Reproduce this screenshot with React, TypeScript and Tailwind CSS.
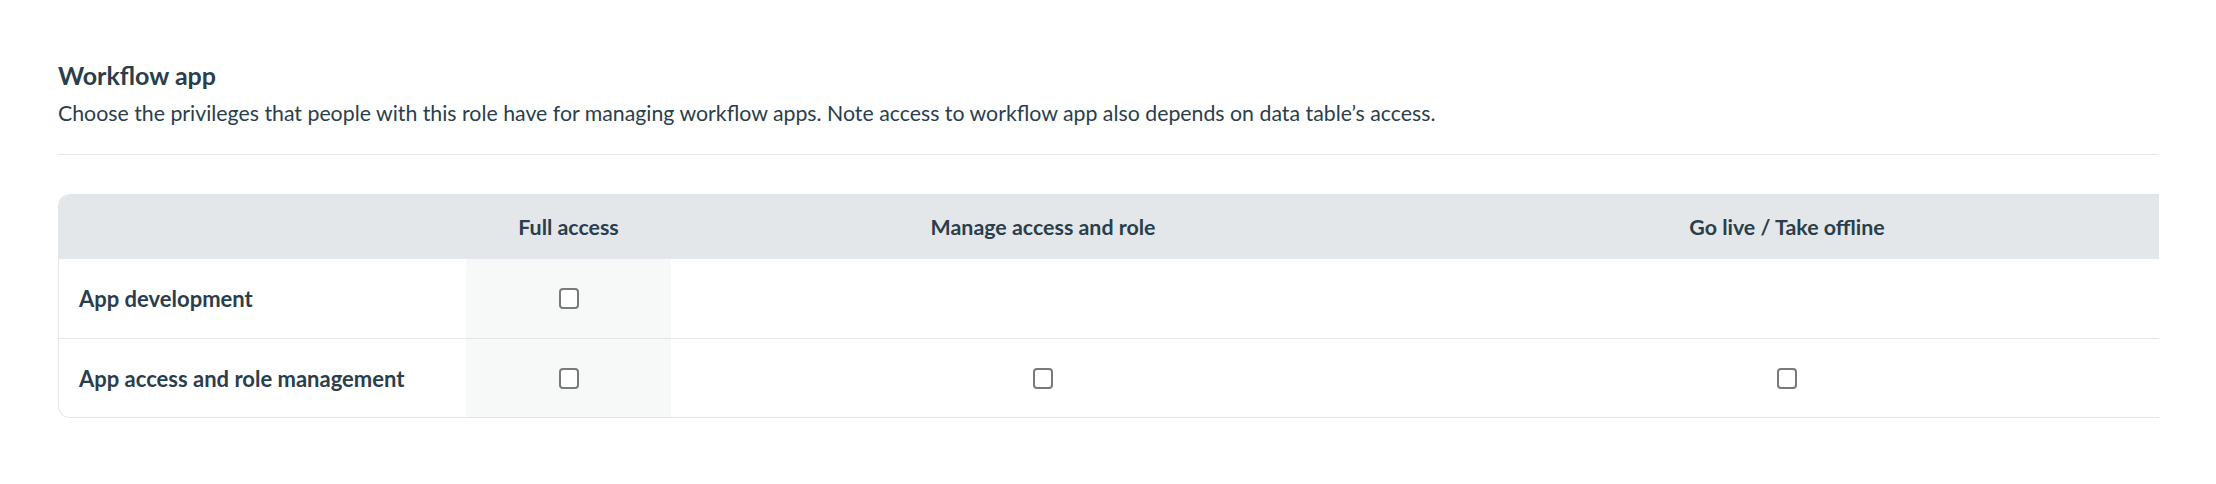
import React from "react";

const COLUMNS = ["Full access", "Manage access and role", "Go live / Take offline"];

const ROWS: { label: string; cells: boolean[] }[] = [
  { label: "App development", cells: [true, false, false] },
  { label: "App access and role management", cells: [true, true, true] },
];

function Checkbox() {
  return (
    <span className="block w-[20px] h-[21px] rounded-[4px] border-2 border-[#7a7a7a] bg-white" />
  );
}

export default function App() {
  return (
    <main
      className="min-h-screen bg-white text-[#2a3e4c] pl-[58px] pr-[57px] pt-[60px]"
      style={{ fontFamily: "Lato, 'Liberation Sans', sans-serif" }}
    >
      <h2 className="text-[25px] leading-[30px] font-bold">Workflow app</h2>
      <p className="mt-[8px] text-[21.3px] leading-[30px]">
        Choose the privileges that people with this role have for managing workflow apps. Note
        access to workflow app also depends on data table’s access.
      </p>
      <div className="mt-[26px] border-t border-[#e5e7e9]" />

      <div className="mt-[39px] border border-r-0 border-[#e3e6e8] rounded-l-[12px] overflow-hidden">
        <div className="grid grid-cols-[407px_205px_1fr_1fr] h-[64px] bg-[#e3e7ea] items-center">
          <div />
          {COLUMNS.map((c) => (
            <div key={c} className="text-center text-[21.4px] font-bold">
              {c}
            </div>
          ))}
        </div>
        {ROWS.map((r, i) => (
          <div
            key={r.label}
            className={`grid grid-cols-[407px_205px_1fr_1fr] h-[79px] ${
              i > 0 ? "border-t border-[#e3e6e8]" : ""
            }`}
          >
            <div className="flex items-center pl-[20px] text-[22px] font-bold">{r.label}</div>
            {r.cells.map((on, j) => (
              <div
                key={j}
                className={`flex items-center justify-center ${j === 0 ? "bg-[#f7f8f8]" : ""}`}
              >
                {on && <Checkbox />}
              </div>
            ))}
          </div>
        ))}
      </div>
    </main>
  );
}
